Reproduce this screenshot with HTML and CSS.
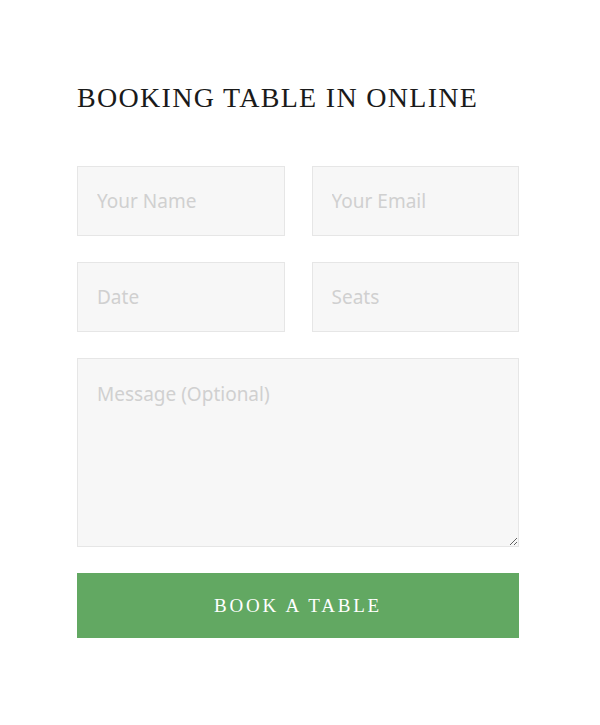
FILE: index.html
```html
<!DOCTYPE html>
<html>
  <head>
    <meta charset="utf-8">
    <title>Booking</title>
    <link rel="stylesheet" href="styles.css">
  </head>
  <body>
    <section class="booking">
      <h2>Booking Table in Online</h2>
      <form>
        <div class="row">
          <input type="text" placeholder="Your Name">
          <input type="email" placeholder="Your Email">
        </div>
        <div class="row">
          <input type="text" placeholder="Date">
          <input type="text" placeholder="Seats">
        </div>
        <textarea placeholder="Message (Optional)"></textarea>
        <button type="submit">Book a Table</button>
      </form>
    </section>
  </body>
</html>
```

FILE: styles.css
```css
body {
  margin: 0;
  background: #fff;
}
.booking {
  width: 442px;
  padding: 81px 0 0 77px;
}
h2 {
  margin: 0 0 51px;
  font-family: "Liberation Serif", serif;
  font-weight: normal;
  font-size: 28px;
  line-height: 34px;
  letter-spacing: 1.3px;
  text-transform: uppercase;
  color: #1a1a1a;
}
form {
  display: flex;
  flex-direction: column;
  gap: 26px;
}
.row {
  display: grid;
  grid-template-columns: 1fr 1fr;
  gap: 27px;
}
input, textarea {
  box-sizing: border-box;
  margin: 0;
  border: 1px solid #e6e6e6;
  background: #f7f7f7;
  font-family: "Noto Sans", sans-serif;
  font-size: 19px;
  color: #444;
  padding: 0 19px;
  outline: none;
}
input {
  height: 70px;
  width: 100%;
}
textarea {
  height: 189px;
  padding-top: 22px;
  resize: vertical;
}
input::placeholder, textarea::placeholder {
  color: #d0d0d0;
}
button {
  height: 65px;
  border: 0;
  background: #62a862;
  color: #fff;
  font-family: "Liberation Serif", serif;
  font-size: 19px;
  letter-spacing: 2.8px;
  text-transform: uppercase;
  cursor: pointer;
}
```
